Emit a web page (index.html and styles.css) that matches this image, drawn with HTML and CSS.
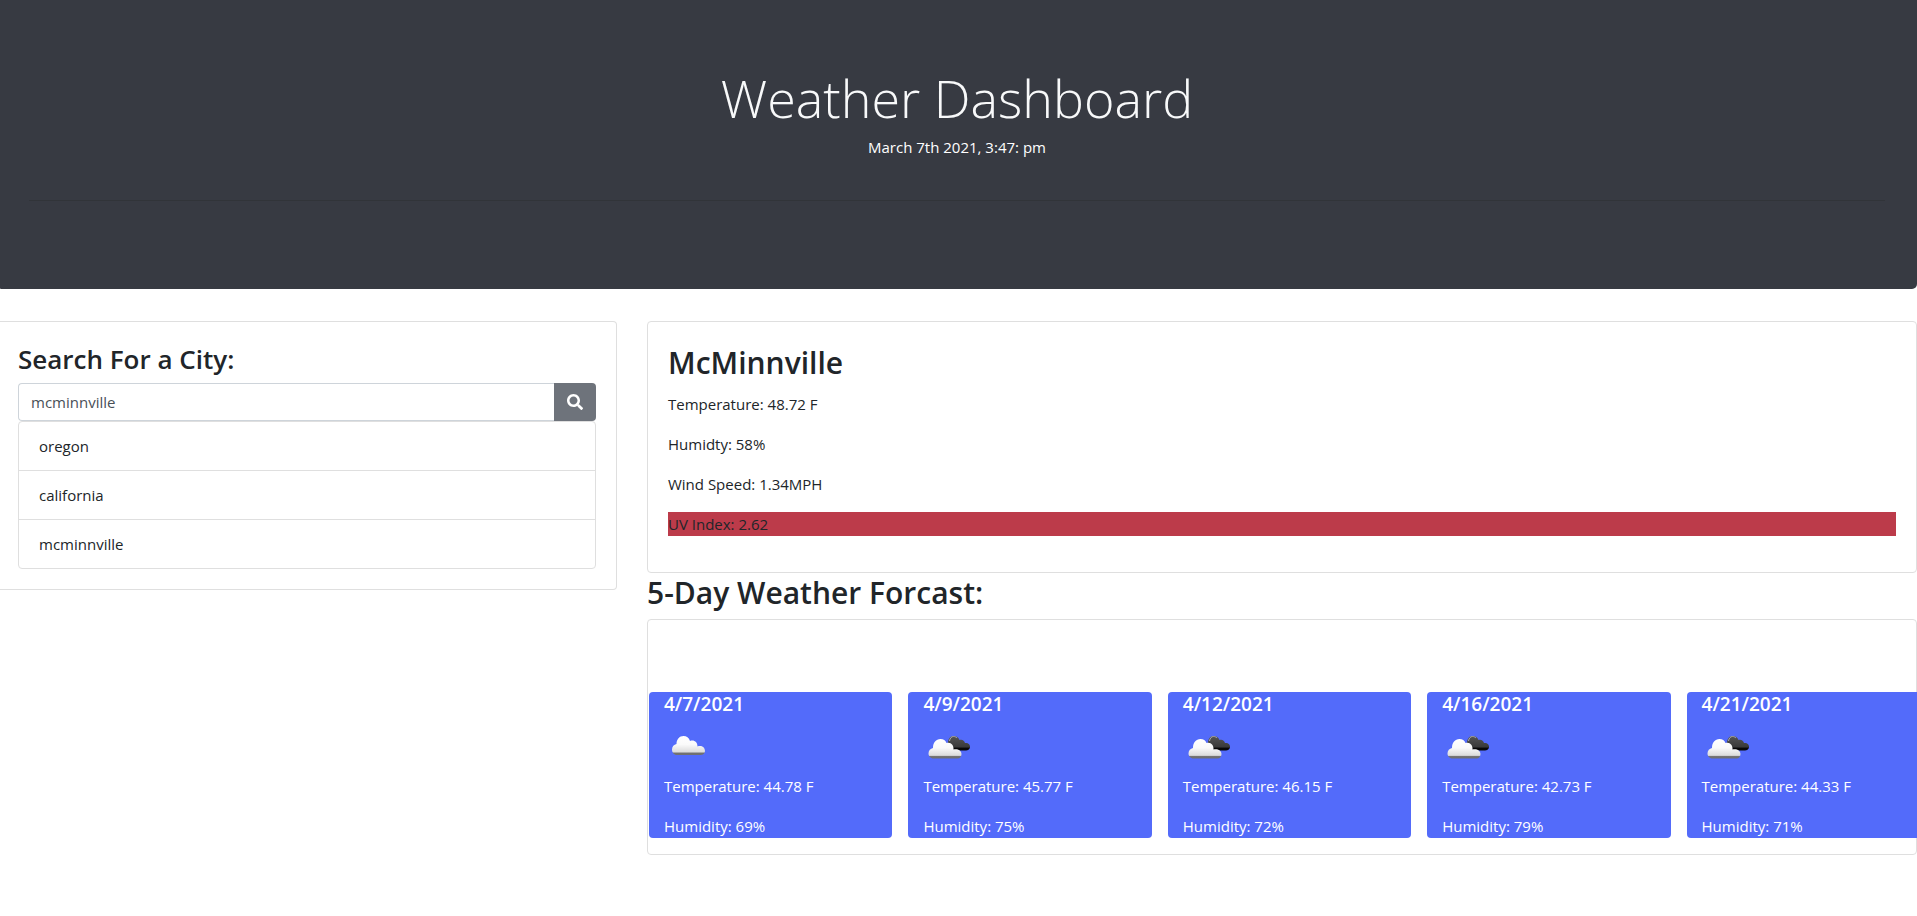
FILE: index.html
```html
<!DOCTYPE html>
<html lang="en">
<head>
<meta charset="utf-8">
<meta name="viewport" content="width=device-width, initial-scale=1">
<title>Weather Dashboard</title>
<link rel="stylesheet" href="styles.css">
</head>
<body>
<svg class="defs" width="0" height="0" aria-hidden="true">
  <defs>
    <linearGradient id="light" x1="0" y1="0" x2="0" y2="1">
      <stop offset="0" stop-color="#fff"/>
      <stop offset="0.45" stop-color="#fafafa"/>
      <stop offset="0.84" stop-color="#dcdcdc"/>
      <stop offset="0.9" stop-color="#707070"/>
      <stop offset="1" stop-color="#707070"/>
    </linearGradient>
    <linearGradient id="dark" x1="0" y1="0" x2="0" y2="1">
      <stop offset="0" stop-color="#555"/>
      <stop offset="0.75" stop-color="#3a3a3a"/>
      <stop offset="0.85" stop-color="#080808"/>
      <stop offset="1" stop-color="#080808"/>
    </linearGradient>
    <symbol id="cloud" viewBox="0 0 50 50">
      <path fill="url(#light)" d="M13 31C10 31 8 28.500 8 25.500C8 22.500 10 20.500 12.500 20C12.500 15.500 15.500 12 19.500 12C22.500 12 25 13.500 26 17C30 15.500 33.500 18 33.500 22.500C37 21 41 23 41 27C41 29.500 39 31 36.500 31Z"/>
    </symbol>
    <symbol id="clouds" viewBox="0 0 50 50">
      <path fill="url(#dark)" d="M25 24C24 16 26.500 12 30.500 12C33.500 12 35.500 13.500 36.500 16C39 15 41.500 16.500 42 19C45 18.500 47.500 20.500 47 23.500C46.500 25.500 45 26.500 43 26.500H32Z"/>
      <path fill="none" stroke="#aaa" stroke-width="1" d="M26.500 17C27 14 28.500 12.500 30.500 12.500C32 12.500 33 13 34 14"/>
      <path fill="url(#light)" d="M10.500 34.500C7.500 34.500 5.500 32 5.500 29.500C5.500 26.500 7.500 24.500 10 24C10 18.500 13 15 17.500 15C20.500 15 22.500 16.500 23.500 19C27.500 17.500 31 21 30.500 25.500C34.500 24.500 38.500 26.500 38.500 30C38.500 32.500 37 34.500 34.500 34.500Z"/>
    </symbol>
  </defs>
</svg>

<header class="hero">
  <h1 class="hero-title">Weather Dashboard</h1>
  <p class="hero-date">March 7th 2021, 3:47: pm</p>
  <hr class="hero-rule">
</header>

<main class="layout">
  <aside class="card search-card">
    <h3 class="search-title"><label for="city">Search For a City:</label></h3>
    <form class="search-form">
      <input class="search-input" id="city" type="text" value="mcminnville">
      <button class="search-button" type="button" aria-label="Search">
        <svg width="16" height="16" viewBox="0 0 512 512" fill="currentColor" aria-hidden="true"><path d="M505 442.700L405.300 343c-4.500-4.500-10.600-7-17-7H372c27.600-35.300 44-79.700 44-128C416 93.100 322.900 0 208 0S0 93.100 0 208s93.100 208 208 208c48.300 0 92.700-16.400 128-44v16.300c0 6.400 2.500 12.500 7 17l99.700 99.700c9.400 9.400 24.600 9.400 33.900 0l28.300-28.300c9.400-9.400 9.400-24.600.1-34zM208 336c-70.700 0-128-57.200-128-128 0-70.700 57.200-128 128-128 70.700 0 128 57.200 128 128 0 70.700-57.200 128-128 128z"/></svg>
      </button>
    </form>
    <ul class="history">
      <li class="history-item">oregon</li>
      <li class="history-item">california</li>
      <li class="history-item">mcminnville</li>
    </ul>
  </aside>

  <div class="results">
    <section class="card current">
      <h2 class="current-city">McMinnville</h2>
      <p class="reading">Temperature: 48.72 F</p>
      <p class="reading">Humidty: 58%</p>
      <p class="reading">Wind Speed: 1.34MPH</p>
      <p class="reading uv">UV Index: 2.62</p>
    </section>

    <h2 class="forecast-title">5-Day Weather Forcast:</h2>
    <section class="card forecast">
      <article class="day">
        <h5 class="day-date">4/7/2021</h5>
        <svg class="day-icon" role="img" aria-label="Cloudy"><use href="#cloud"/></svg>
        <p class="reading">Temperature: 44.78 F</p>
        <p class="reading">Humidity: 69%</p>
      </article>
      <article class="day">
        <h5 class="day-date">4/9/2021</h5>
        <svg class="day-icon" role="img" aria-label="Broken clouds"><use href="#clouds"/></svg>
        <p class="reading">Temperature: 45.77 F</p>
        <p class="reading">Humidity: 75%</p>
      </article>
      <article class="day">
        <h5 class="day-date">4/12/2021</h5>
        <svg class="day-icon" role="img" aria-label="Broken clouds"><use href="#clouds"/></svg>
        <p class="reading">Temperature: 46.15 F</p>
        <p class="reading">Humidity: 72%</p>
      </article>
      <article class="day">
        <h5 class="day-date">4/16/2021</h5>
        <svg class="day-icon" role="img" aria-label="Broken clouds"><use href="#clouds"/></svg>
        <p class="reading">Temperature: 42.73 F</p>
        <p class="reading">Humidity: 79%</p>
      </article>
      <article class="day">
        <h5 class="day-date">4/21/2021</h5>
        <svg class="day-icon" role="img" aria-label="Broken clouds"><use href="#clouds"/></svg>
        <p class="reading">Temperature: 44.33 F</p>
        <p class="reading">Humidity: 71%</p>
      </article>
    </section>
  </div>
</main>
</body>
</html>
```
FILE: styles.css
```css
*,
*::before,
*::after {
  box-sizing: border-box;
}

body {
  margin: 0;
  overflow-x: hidden;
  background: #fff;
  color: #212529;
  font-family: "Open Sans", "Noto Sans", sans-serif;
  font-size: 15px;
  line-height: 24px;
}

h1, h2, h3, h5, p, ul {
  margin: 0;
}

.defs {
  position: absolute;
}

.hero {
  padding: 64px 32px 64px 29px;
  border-radius: 0 0 5px 1px;
  background: #373a42;
  color: #fff;
  text-align: center;
}

.hero-title {
  margin-bottom: 4px;
  color: #f8f9fa;
  font-size: 52px;
  font-weight: 300;
  line-height: 67px;
}

.hero-rule {
  margin: 41px 0 24px;
  border: 0;
  border-top: 1px solid #313439;
}

.layout {
  display: grid;
  grid-template-columns: calc(33.333% - 22px) minmax(0, 1fr);
  gap: 30px;
  align-items: start;
  margin-top: 32px;
}

.card {
  border: 1px solid #dfdfdf;
  border-radius: 4px;
  background: #fff;
}

.search-card {
  padding: 20px 20px 20px 18px;
  border-left: 0;
  border-top-left-radius: 0;
  border-bottom-left-radius: 0;
}

.search-title {
  margin-bottom: 7px;
  font-size: 26px;
  font-weight: 600;
  line-height: 34px;
}

.search-form {
  display: flex;
}

.search-input {
  flex: 1;
  min-width: 0;
  height: 38px;
  padding: 6px 12px;
  border: 1px solid #ced4da;
  border-right: 0;
  border-radius: 4px 0 0 4px;
  background: #fff;
  color: #495057;
  font: inherit;
}

.search-button {
  display: flex;
  align-items: center;
  justify-content: center;
  width: 42px;
  height: 38px;
  padding: 0;
  border: 0;
  border-radius: 0 4px 4px 0;
  background: #6e737b;
  color: #fff;
}

.history {
  padding: 0;
  border: 1px solid #dfdfdf;
  border-radius: 4px;
  list-style: none;
}

.history-item {
  padding: 12px 20px;
}

.history-item + .history-item {
  border-top: 1px solid #dfdfdf;
}

.current {
  padding: 20px 20px 36px;
}

.current-city {
  margin-bottom: 8px;
  font-size: 30px;
  font-weight: 600;
  line-height: 42px;
}

.reading + .reading {
  margin-top: 16px;
}

.uv {
  background: #bc3b4a;
}

.forecast-title {
  margin-bottom: 6px;
  font-size: 30px;
  font-weight: 600;
  line-height: 40px;
}

.forecast {
  display: flex;
  gap: 16px;
  padding: 72px 0 16px 1px;
}

.day {
  flex: none;
  width: calc(20% - 10px);
  padding: 0 15px;
  border-radius: 4px;
  background: #536bfa;
  color: #fff;
}

.day-date {
  margin-bottom: 8px;
  font-size: 19px;
  font-weight: 600;
  line-height: 24px;
}

.day-icon {
  display: block;
  width: 50px;
  height: 50px;
}
```
